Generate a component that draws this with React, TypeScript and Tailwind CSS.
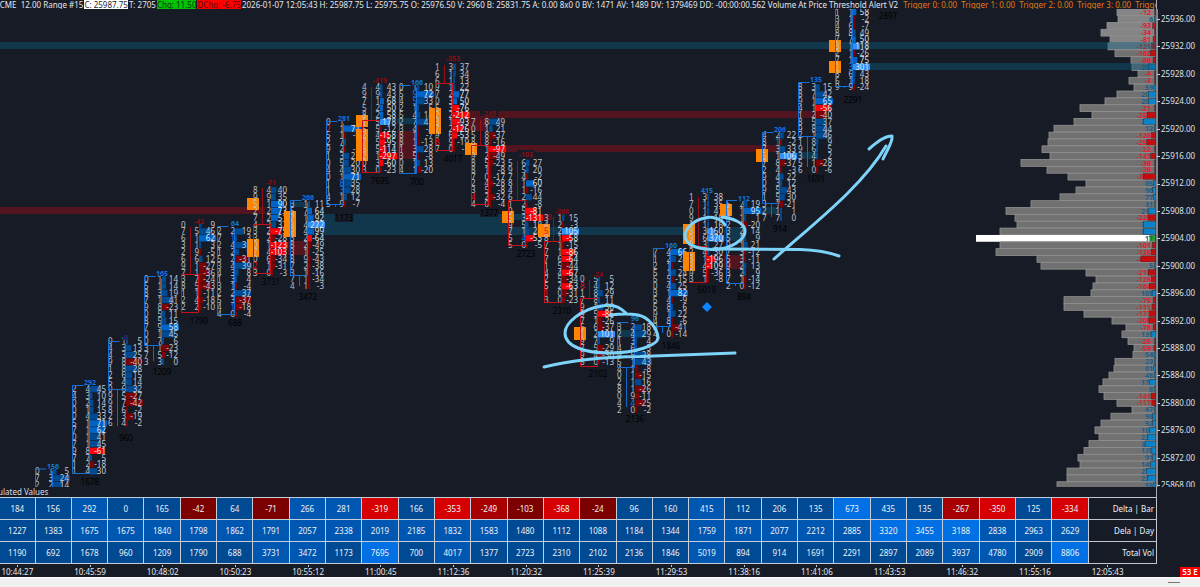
import React from "react";

type Span = [number, number];

interface Candle {
  /** Column index on the time axis. */
  col: number;
  /** First price row, counted down from 25936. */
  row: number;
  left: string;
  mid: string;
  deltas: (number | null)[];
  up: boolean;
  body: Span;
  wick?: Span;
  label?: string;
  labelY?: number;
  labelFill?: string;
  volume: string;
  volumeY: number;
  orange?: Span[];
  hotLeft?: number[];
  hotMid?: number[];
}

const FONT = "font-['Noto_Sans','Open_Sans',sans-serif]";
const BACKDROP = "#171b26";
const ROW = 6.855;
const rowY = (r: number) => 19 + r * ROW;
const baseline = (r: number) => Math.round(rowY(r) + 2.9);
const colX = (i: number) => Math.round(17 + i * 36.33);

const candles: Candle[] = [
  { col: 1, row: 66, left: "072", mid: "132", deltas: [5, 24, 14], up: true, body: [469, 500], label: "156", labelY: 466, volume: "692", volumeY: 520 },
  { col: 2, row: 54, left: "2400057079711", mid: "4321411118724", deltas: [45, 10, 14, 15, 33, 71, 62, 41, 45, -61, 5, -18, 30], up: true, body: [385.5, 473.5], label: "292", labelY: 382, volume: "1678", volumeY: 482 },
  { col: 3, row: 47, left: "0449125099826", mid: "1338864657634", deltas: [5, 13, 25, -40, 28, 15, 14, 32, -27, -42, -2, -19, -2], up: true, body: [341.5, 389.5], wick: [389.5, 426], label: "0", labelY: 337, labelFill: "#2c3272", volume: "960", volumeY: 438 },
  { col: 4, row: 38, left: "0587908700373", mid: "1131855917153", deltas: [14, 14, 19, 41, -23, 11, 15, 58, 45, 6, -23, -12, 0], up: true, body: [276.5, 345.5], wick: [345.5, 361], label: "165", labelY: 273, volume: "1209", volumeY: 372 },
  { col: 5, row: 30, left: "0763269738122", mid: " 511961175142", deltas: [9, 46, 62, 3, -5, 12, -27, -36, -24, -43, -11, -18, -10], up: false, body: [274.5, 312.5], wick: [227, 274.5], label: "-42", labelY: 221, volume: "1790", volumeY: 321 },
  { col: 6, row: 31, left: "2721534132544", mid: "2142243312310", deltas: [19, 3, 39, 9, -31, 39, 8, 4, -4, 37, -37, -18, -4], up: true, body: [226.5, 314.5], label: "64", labelY: 223, volume: "688", volumeY: 323, hotMid: [1, 11] },
  { col: 7, row: 25, left: "8952743307023", mid: "4912232214610", deltas: [40, 35, 90, 73, 51, 37, -75, -28, -123, -103, -34, -31, -3], up: false, body: [224.5, 273.5], wick: [188, 224.5], label: "-71", labelY: 182, volume: "3731", volumeY: 282, orange: [[198, 210], [239, 257]], hotLeft: [11] },
  { col: 8, row: 27, left: "3573938387374", mid: "1714422192111", deltas: [11, 64, 92, 272, 99, -64, -49, -25, -43, -38, -16, -34, -3], up: true, body: [200.5, 275.5], wick: [275.5, 286], label: "266", labelY: 197, volume: "3472", volumeY: 297, orange: [[211, 237]] },
  { col: 9, row: 15, left: "0252910401145", mid: "1117235418319", deltas: [null, 71, -6, 7, -3, 22, 20, 30, 71, 35, 28, 12, -7], up: true, body: [121.5, 204.5], wick: [204.5, 207], label: "281", labelY: 118, volume: "1173", volumeY: 218, hotLeft: [1], hotMid: [9, 10] },
  { col: 10, row: 10, left: "4975815278203", mid: "4912255455130", deltas: [43, 43, 68, 50, 58, 178, -12, -158, -95, -114, -297, -60, -23], up: false, body: [120.5, 172.5], wick: [87, 120.5], label: "-319", labelY: 80, volume: "7695", volumeY: 181, orange: [[115, 127], [129, 161]] },
  { col: 11, row: 10, left: "0542523881304", mid: "1951474113511", deltas: [10, 72, 33, 5, 14, 42, -8, -7, -13, 28, -8, 13, -20], up: true, body: [85.5, 173.5], label: "166", labelY: 82, volume: "700", volumeY: 182, hotMid: [1, 2] },
  { col: 12, row: 7, left: "1669705237987", mid: "3111233212690", deltas: [37, 34, 13, 22, 77, 50, -76, -212, -93, -126, -53, -19, -7], up: false, body: [83.5, 150.5], wick: [65, 83.5], label: "-353", labelY: 58, volume: "4017", volumeY: 159, orange: [[108, 134]], hotLeft: [11] },
  { col: 13, row: 15, left: "7058198872344", mid: "8188125104520", deltas: [49, 21, -37, -16, -97, -49, -23, -8, -17, -28, -8, -32, -4], up: false, body: [145.5, 204.5], wick: [120, 145.5], label: "-249", labelY: 113, volume: "1377", volumeY: 213, orange: [[143, 155]], hotLeft: [11] },
  { col: 14, row: 21, left: "5978461059755", mid: "6541122535140", deltas: [27, 20, -2, 60, -16, 44, -8, -81, -131, 18, 24, -53, -5], up: false, body: [200.5, 245.5], wick: [161, 200.5], label: "-103", labelY: 154, volume: "2723", volumeY: 254, orange: [[211, 223]], hotMid: [11] },
  { col: 15, row: 29, left: "3458777142513", mid: "1221116545200", deltas: [15, -3, 105, -58, -15, -86, -64, -44, -67, -34, -63, -31, -23], up: false, body: [241.5, 302.5], wick: [217, 241.5], label: "-368", labelY: 211, volume: "2310", volumeY: 311, orange: [[224, 237]], hotLeft: [2, 11] },
  { col: 16, row: 38, left: "0817997619798", mid: "5488151627540", deltas: [5, 12, 29, 11, 30, -85, -26, -37, 101, 9, -29, -30, -13], up: false, body: [298.5, 366.5], wick: [280, 298.5], label: "-24", labelY: 274, volume: "2102", volumeY: 374, orange: [[327, 340]], hotLeft: [1] },
  { col: 17, row: 45, left: "3214954028042", mid: "2436511111940", deltas: [18, 29, 4, 5, 28, 43, -8, -15, 16, -26, -11, -25, -2], up: true, body: [322.5, 367.5], wick: [367.5, 407], label: "96", labelY: 318, volume: "2136", volumeY: 419, hotMid: [11] },
  { col: 18, row: 34, left: "7125503559434", mid: "4211541481870", deltas: [66, 24, -4, 24, -15, 25, 82, -9, 6, 22, -6, -41, -14], up: true, body: [248.5, 326.5], wick: [326.5, 333], label: "160", labelY: 245, volume: "1846", volumeY: 346 },
  { col: 19, row: 26, left: "1709189828393", mid: "3111136341451", deltas: [38, 35, 41, 15, 16, 160, 370, 27, 30, -196, -109, -36, -8], up: false, body: [246.5, 282.5], wick: [197, 246.5], label: "415", labelY: 190, volume: "5019", volumeY: 290, orange: [[224, 244], [252, 271]] },
  { col: 20, row: 27, left: "5542359759372", mid: "2111211332210", deltas: [19, 95, 1, -20, 14, 9, 21, -12, -11, 13, 9, -14, -12], up: true, body: [200.5, 283.5], wick: [283.5, 286], label: "112", labelY: 198, volume: "894", volumeY: 297, orange: [[204, 216]] },
  { col: 21, row: 17, left: "4875729091327", mid: "2131844355117", deltas: [22, -2, 33, 106, -37, -3, 22, 12, 43, 30, -21, 1, 0], up: true, body: [132.5, 203.5], wick: [203.5, 217], label: "206", labelY: 129, volume: "914", volumeY: 229, orange: [[149, 162]], hotMid: [1] },
  { col: 22, row: 10, left: "8894189219356", mid: "3711258186410", deltas: [15, 42, 65, -56, -40, 37, 44, 46, 9, 5, 2, -28, -6], up: true, body: [82.5, 136.5], wick: [136.5, 167], label: "135", labelY: 79, volume: "1691", volumeY: 179 },
  { col: 23, row: -1, left: "134878271869", mid: "116871113619", deltas: [58, -2, -7, 49, 50, 118, -26, 75, 301, 43, 18, -24], up: true, body: [0, 86.5], wick: [86.5, 88], volume: "2291", volumeY: 100, orange: [[40, 52], [61, 73]], hotMid: [8] },
];

/** Support and resistance zones: x1, x2, y1, y2, kind. */
const zones: [number, number, number, number, "teal" | "red"][] = [
  [0, 1156, 42, 49, "teal"],
  [852, 1156, 63, 70, "teal"],
  [0, 265, 207, 214, "red"],
  [470, 818, 111, 118, "red"],
  [468, 488, 118, 131, "red"],
  [505, 778, 145, 152, "red"],
  [397, 415, 131, 159, "red"],
  [397, 415, 118, 124, "teal"],
  [323, 509, 214, 235, "teal"],
  [509, 690, 227, 235, "teal"],
  [509, 525, 214, 220, "teal"],
  [527, 552, 214, 220, "red"],
  [290, 306, 202, 207, "teal"],
  [288, 306, 241, 255, "red"],
  [724, 742, 227, 241, "teal"],
  [724, 742, 255, 269, "red"],
  [760, 778, 207, 214, "teal"],
  [797, 815, 152, 159, "teal"],
  [617, 634, 330, 337, "teal"],
];

/** Volume profile from 25937 down: bar length and delta. */
const profile: [number, number][] = [
  [38, -12], [37, 6], [48, -93], [54, -34], [45, -81], [47, -121], [40, -162], [24, -80], [23, 204], [17, -4],
  [26, -3], [21, 59], [38, 208], [50, 208], [75, -21], [63, -252], [81, 342], [101, 12], [106, -126], [107, -258],
  [113, -22], [105, -147], [134, -36], [108, -26], [87, -364], [69, 65], [79, 96], [95, 77], [124, 31], [149, 210],
  [140, -227], [138, 345], [155, 358], [179, 171], [155, -101], [159, -135], [118, -422], [114, 5], [69, -218], [59, -128],
  [62, -184], [64, 109], [91, -75], [91, -111], [71, -177], [43, -200], [29, -78], [33, 139], [27, -25], [21, -59],
  [22, 54], [40, 23], [41, 61], [46, 48], [52, 175], [56, 8], [51, -141], [38, -117], [23, 47], [44, 98],
  [54, 92], [60, 187], [56, 237], [66, 305], [71, 139], [77, 91], [75, 149], [88, 274], [88, 237], [98, 58],
];

const deltaBar = [184, 156, 292, 0, 165, -42, 64, -71, 266, 281, -319, 166, -353, -249, -103, -368, -24, 96, 160, 415, 112, 206, 135, 673, 435, 135, -267, -350, 125, -334];
const deltaDay = [1227, 1383, 1675, 1675, 1840, 1798, 1862, 1791, 2057, 2338, 2019, 2185, 1832, 1583, 1480, 1112, 1088, 1184, 1344, 1759, 1871, 2077, 2212, 2885, 3320, 3455, 3188, 2838, 2963, 2629];
const totalVol = [1190, 692, 1678, 960, 1209, 1790, 688, 3731, 3472, 1173, 7695, 700, 4017, 1377, 2723, 2310, 2102, 2136, 1846, 5019, 894, 914, 1691, 2291, 2897, 2089, 3937, 4780, 2909, 8806];

const times = ["10:44:27", "10:45:59", "10:48:02", "10:50:23", "10:55:12", "11:00:45", "11:12:36", "11:20:32", "11:25:39", "11:29:53", "11:38:16", "11:41:06", "11:43:53", "11:46:32", "11:55:16", "12:05:43"];

function deltaFill(v: number) {
  if (v >= 100) return "#3390fb";
  if (v >= 50) return "#0063c8";
  if (v >= 0) return "#004a92";
  if (v <= -50) return "#ff0008";
  return "#7d0206";
}

function cellTone(v: number, mid: number, high: number) {
  if (v <= -300) return "bg-[#d60000]";
  if (v <= -200) return "bg-[#a80000]";
  if (v < 0) return "bg-[#7c0000]";
  if (v >= high) return "bg-[#0070e4]";
  if (v >= mid) return "bg-[#0057b2]";
  return "bg-[#004993]";
}

function FootprintCandle({ c }: { c: Candle }) {
  const x = colX(c.col);
  const max = Math.max(...c.deltas.map((d) => Math.abs(d ?? 0)));
  const line = c.up ? "#1470d8" : "#cc1018";
  const [top, bottom] = c.body;
  const l = x - 17.5;
  const r = x - 0.5;
  const topEnd = c.up ? l + 11 : r;
  return (
    <g>
      {c.orange?.map(([a, b]) => (
        <rect key={a} x={x - 24} y={a} width={12} height={b - a} fill="#ff8500" />
      ))}
      {c.deltas.map((d, i) =>
        d === null ? null : (
          <rect key={i} x={x} y={rowY(c.row + i) - 3.2} width={Math.max(2, (Math.abs(d) / max) * 17)} height={6.3} fill={deltaFill(d)} />
        )
      )}
      {[...c.left].map((ch, i) => (
        <text key={i} x={x - 18} y={baseline(c.row + i)} fill={c.hotLeft?.includes(i) ? "#f01018" : "#bcc0c7"}>{ch}</text>
      ))}
      {[...c.mid].map((ch, i) => (
        <text key={i} x={x} y={baseline(c.row + i)} textAnchor="end" fill={c.hotMid?.includes(i) ? "#1480f0" : "#bcc0c7"}>{ch}</text>
      ))}
      {c.deltas.map((d, i) =>
        d === null ? null : (
          <text key={i} x={x + 16} y={baseline(c.row + i)} textAnchor="end" fill={Math.abs(d) >= 50 ? "#dfe6ef" : "#c4c8ce"}>{d}</text>
        )
      )}
      <path d={`M${topEnd} ${top}H${l}V${bottom}H${r}V${top + (c.up ? 2 : 0)}`} fill="none" stroke={line} />
      {c.wick && <path d={`M${x - 8.5} ${c.wick[0]}V${c.wick[1]}`} stroke={c.up ? "#1268c8" : "#96101a"} />}
      {c.label && (
        <g>
          <rect x={x - 2 * c.label.length - 1} y={(c.labelY ?? 0) - 4} width={4 * c.label.length + 2} height={7} fill={BACKDROP} />
          <text x={x} y={(c.labelY ?? 0) + 3} textAnchor="middle" className="text-[7px] font-bold" fill={c.labelFill ?? (c.label.startsWith("-") ? "#8a0c12" : "#0f76de")}>{c.label}</text>
        </g>
      )}
      <rect x={x - 2.3 * c.volume.length} y={c.volumeY - 4} width={4.6 * c.volume.length} height={8} fill={BACKDROP} />
      <text x={x} y={c.volumeY + 3} textAnchor="middle" fill="#000000">{c.volume}</text>
    </g>
  );
}

function VolumeProfile() {
  return (
    <g>
      {profile.map(([len, delta], i) => {
        const y = rowY(i - 1);
        const current = i === 33;
        const w = Math.max(1.5, Math.abs(delta) / 28);
        return (
          <g key={i}>
            <rect x={1155 - len} y={y - 3.4} width={len} height={6.8} fill={current ? "#ffffff" : i < 6 ? "#858585" : "#717171"} stroke={current ? "none" : "#929292"} strokeWidth={0.8} />
            <text x={delta < 0 ? 1151 : 1153} y={Math.round(y + 2.6)} textAnchor="end" className="text-[7px] font-bold" fill={delta < 0 ? "#e0222a" : "#245d92"}>{current ? "17" : delta}</text>
            <rect x={1156 - w} y={y - 3} width={w} height={6} fill={current ? "#0a8a10" : delta < 0 ? "#cc0000" : "#0088d8"} stroke="#20242c" strokeWidth={0.5} opacity={0.85} />
          </g>
        );
      })}
    </g>
  );
}

function PriceAxis() {
  return (
    <g>
      <path d="M1157 0V487" stroke="#a9abb0" strokeWidth={1.5} />
      {Array.from({ length: 18 }, (_, i) => (
        <g key={i}>
          <path d={`M1157 ${Math.round(rowY(i * 4)) + 0.5}h3`} stroke="#c8cacd" />
          <text x={1161} y={baseline(i * 4)} fill="#dfe1e4">{`${25936 - i * 4}.00`}</text>
        </g>
      ))}
    </g>
  );
}

function Annotations() {
  return (
    <g fill="none" stroke="#7ed3fb" strokeWidth={3} strokeLinecap="round" strokeLinejoin="round">
      <path d="M626 313C619 306 610 304 602 306C581 309 565 323 565 333C565 347 586 353 610 353C636 353 659 345 658 337C657 329 649 317 638 315C628 313 618 314 610 315" />
      <path d="M544 367C572 360 605 357 640 356.500L735 353" />
      <path d="M725 225C722 219 712 216 705 218C694 220 685 228 685 236C686 246 700 249 712 249.500C731 250 746 239 745 230C744 223 733 218 722 217" />
      <path d="M713 249L800 249.500C815 250 828 252 839 256" />
      <path d="M774 259C812 225 862 187 886 146" />
      <path d="M869 149C876 143 884 136 892 136C893 142 887 150 883 159" />
    </g>
  );
}

function Chart() {
  return (
    <svg viewBox="0 9 1200 478" className="block w-full text-[8px]" role="img" aria-label="Footprint chart">
      <VolumeProfile />
      {zones.map(([x1, x2, y1, y2, kind], i) => (
        <rect key={i} x={x1} y={y1} width={x2 - x1} height={y2 - y1} fill={kind === "teal" ? "#0c5a7e" : "#9c0d18"} opacity={0.45} />
      ))}
      {candles.map((c) => <FootprintCandle key={c.col} c={c} />)}
      <text x={888} y={19} textAnchor="middle" fill="#000000">2897</text>
      <path d="M707 302l5 5-5 5-5-5z" fill="#0a84ff" />
      <PriceAxis />
      <Annotations />
    </svg>
  );
}

function StatusLine() {
  return (
    <header className="mr-[43px] flex h-[9px] items-center overflow-hidden border-r border-[#a9abb0] leading-[9px] text-[#e4e6ea]">
      <div className="-ml-[2px] flex gap-px whitespace-pre">
        <span>.CME  12.00 Range #15</span>
        <span className="bg-white text-[#20242c]">C: 25987.75</span>
        <span>T: 2705</span>
        <span className="bg-[#00c400] text-[#0c3010]">Chg: 11.50</span>
        <span className="bg-[#ff0000] text-[#5a0808]">DChg: -6.75</span>
        <span>2026-01-07 12:05:43 H: 25987.75 L: 25975.75 O: 25976.50 V: 2960 B: 25831.75 A: 0.00 8x0 0 BV: 1471 AV: 1489 DV: 1379469 DD: -00:00:00.562 Volume At Price Threshold Alert V2</span>
        <span className="text-[#e07a10]">  Trigger 0: 0.00  Trigger 1: 0.00  Trigger 2: 0.00  Trigger 3: 0.00  Trigger 4: 0.00</span>
      </div>
    </header>
  );
}

function ValuesTable() {
  const rows = [
    { name: "Delta | Bar", values: deltaBar, mid: 250, high: 600 },
    { name: "Dela | Day", values: deltaDay, mid: 1500, high: 3100 },
    { name: "Total Vol", values: totalVol, mid: 3000, high: 7000 },
  ];
  return (
    <div className="mr-[43px]">
      <table className="w-full table-fixed border-collapse text-center text-[#eef2f7]">
        <colgroup>
          <col className="w-[35px]" />
          {deltaBar.slice(1).map((_, i) => <col key={i} />)}
          <col className="w-[68px]" />
        </colgroup>
        <tbody>
          {rows.map((row) => (
            <tr key={row.name} className="h-[22px]">
              {row.values.map((v, i) => (
                <td key={i} className={`border border-l-0 border-[#c3cedb] p-0 ${cellTone(v, row.mid, row.high)}`}>{v}</td>
              ))}
              <th scope="row" className="border border-[#c3c5c9] p-0 pr-0.5 text-right font-normal">{row.name}</th>
            </tr>
          ))}
        </tbody>
      </table>
    </div>
  );
}

export default function App() {
  return (
    <div className={`flex min-h-screen flex-col overflow-hidden bg-[#171b26] text-[8px] leading-[10px] ${FONT}`}>
      <StatusLine />
      <Chart />
      <h2 className="mr-[43px] h-[10px] border-r border-[#a9abb0] text-[#dcdee2]"><span className="-ml-[2px]">ulated Values</span></h2>
      <ValuesTable />
      <div className="flex h-[13px] items-end">
        <div className="-ml-[19px] flex flex-1 text-[#e4e6ea]">
          {times.map((t) => (
            <div key={t} className="flex flex-1 flex-col items-center">
              <span className="h-[2px] w-px bg-[#c8cacd]" />
              <time>{t}</time>
            </div>
          ))}
        </div>
        <span className="ml-9 w-5 overflow-hidden whitespace-nowrap bg-[#ff0000] text-center font-semibold text-white">53 E</span>
      </div>
      <footer className="flex flex-1 items-center justify-end border-t border-white bg-[#f0f0f0] pr-5">
        <span className="h-px w-3 bg-[#777777]" />
      </footer>
    </div>
  );
}
